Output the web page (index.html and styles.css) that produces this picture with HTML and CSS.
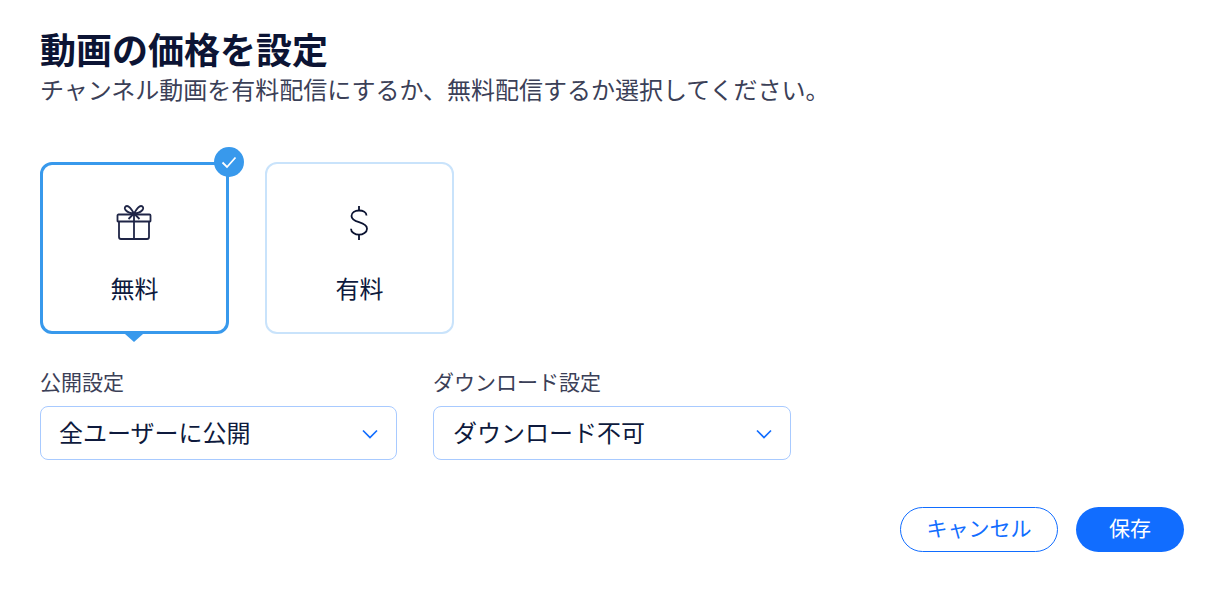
FILE: index.html
```html
<!DOCTYPE html>
<html lang="ja">
<head>
<meta charset="utf-8">
<title>動画の価格を設定</title>
<link rel="stylesheet" href="styles.css">
</head>
<body>
<main class="dialog">
  <h1 class="title">動画の価格を設定</h1>
  <p class="subtitle">チャンネル動画を有料配信にするか、無料配信するか選択してください。</p>
  <div class="options">
    <div class="option selected">
      <svg class="icon gift" viewBox="0 0 36 36" width="36" height="36" fill="none" stroke="#1f2546" stroke-width="1.800">
        <path d="M1.500 10.500a1 1 0 0 1 1-1h31a1 1 0 0 1 1 1V16a.5.5 0 0 1-.5.5H2a.5.5 0 0 1-.5-.5z"/>
        <path d="M3 16.500V32a2 2 0 0 0 2 2h26a2 2 0 0 0 2-2V16.500"/>
        <path d="M18 9.500V34"/>
        <path d="M18 8.500C16 5 13 1 11 1 9 1 8 3.500 9.500 5c1.500 1.500 5 3.500 8.500 3.500 3.500 0 7-2 8.500-3.500C28 3.500 27 1 25 1c-2 0-5 4-7 7.500z"/>
        <path d="M18 8.500 12.500 14M18 8.500 23.500 14"/>
      </svg>
      <span class="option-label">無料</span>
      <span class="badge">
        <svg viewBox="0 0 16 16" width="16" height="16" fill="none" stroke="#fff" stroke-width="1.800"><path d="M1.500 8.500 6 13 14.500 3.500"/></svg>
      </span>
      <span class="pointer"></span>
    </div>
    <div class="option">
      <svg class="icon dollar" viewBox="0 0 36 36" width="36" height="36" fill="none" stroke="#0a1230" stroke-width="1.800">
        <path d="M25.500 10.500c0-3.200-3.500-5-7.500-5s-7.500 2-7.500 5.500c0 3.500 3.500 5 7.500 6.200 4 1.200 8 3 8 6.500s-4 6-8 6-8-2.500-8-6"/>
        <path d="M18 1v4.500M18 29.500V35"/>
      </svg>
      <span class="option-label">有料</span>
    </div>
  </div>
  <div class="fields">
    <div class="field">
      <label class="field-label">公開設定</label>
      <div class="select"><span class="select-value">全ユーザーに公開</span>
        <svg class="chevron" viewBox="0 0 16 10" width="16" height="10" fill="none" stroke="#116dff" stroke-width="1.700"><path d="M1 1.500 8 8.500 15 1.500"/></svg>
      </div>
    </div>
    <div class="field wide">
      <label class="field-label">ダウンロード設定</label>
      <div class="select"><span class="select-value">ダウンロード不可</span>
        <svg class="chevron" viewBox="0 0 16 10" width="16" height="10" fill="none" stroke="#116dff" stroke-width="1.700"><path d="M1 1.500 8 8.500 15 1.500"/></svg>
      </div>
    </div>
  </div>
  <div class="actions">
    <button class="btn secondary">キャンセル</button>
    <button class="btn primary">保存</button>
  </div>
</main>
</body>
</html>
```
FILE: styles.css
```css
* { box-sizing: border-box; }
html, body { margin: 0; padding: 0; background: #fff; }
body {
  width: 1224px;
  height: 594px;
  overflow: hidden;
  font-family: "Noto Sans CJK JP", "Noto Sans", sans-serif;
  color: #0e1a3d;
}
.dialog { padding: 27px 40px 0; display: flex; flex-direction: column; }
.title {
  margin: 0;
  font-size: 36px;
  line-height: 42px;
  font-weight: 700;
  color: #0c1434;
}
.subtitle {
  margin: 2px 0 0;
  font-size: 24px;
  line-height: 36px;
  color: #3b4057;
  font-weight: 400;
}
.options { display: flex; gap: 36px; margin-top: 55px; }
.option {
  position: relative;
  width: 189px;
  height: 172px;
  border: 2px solid #c9e3fb;
  border-radius: 12px;
  display: flex;
  flex-direction: column;
  align-items: center;
  padding-top: 41px;
  background: #fff;
}
.option.selected { border: 3px solid #3899ec; padding-top: 40px; }
.icon { display: block; flex: none; }
.gift { margin-left: -2px; }
.dollar { margin-left: -2px; }
.option-label { font-size: 24px; line-height: 36px; margin-top: 29px; color: #0e1a3d; }
.badge {
  position: absolute;
  top: -18px;
  right: -18px;
  width: 30px;
  height: 30px;
  border-radius: 50%;
  background: #3899ec;
  display: flex;
  align-items: center;
  justify-content: center;
}
.pointer {
  position: absolute;
  left: 50%;
  bottom: -11px;
  margin-left: -10px;
  border-left: 9px solid transparent;
  border-right: 9px solid transparent;
  border-top: 8px solid #3899ec;
}
.fields { display: flex; gap: 36px; margin-top: 34px; }
.field { width: 357px; display: flex; flex-direction: column; }
.field.wide { width: 358px; }
.field-label { font-size: 21px; line-height: 26px; color: #3b4057; height: 38px; }
.select {
  height: 54px;
  border: 1px solid #a8caff;
  border-radius: 8px;
  display: flex;
  align-items: center;
  justify-content: space-between;
  padding: 0 18px;
  font-size: 24px;
  color: #0e1a3d;
}
.select-value { padding-bottom: 4px; }
.wide .select-value { padding-left: 1px; }
.chevron { margin-top: 2px; }
.actions { display: flex; justify-content: flex-end; gap: 18px; margin-top: 47px; }
.btn {
  height: 45px;
  border-radius: 23px;
  font-family: inherit;
  font-size: 21px;
  padding: 0 0 5px;
}
.btn.secondary { width: 158px; background: #fff; color: #116dff; border: 1px solid #116dff; }
.btn.primary { width: 108px; background: #116dff; color: #fff; border: 0; }
```
